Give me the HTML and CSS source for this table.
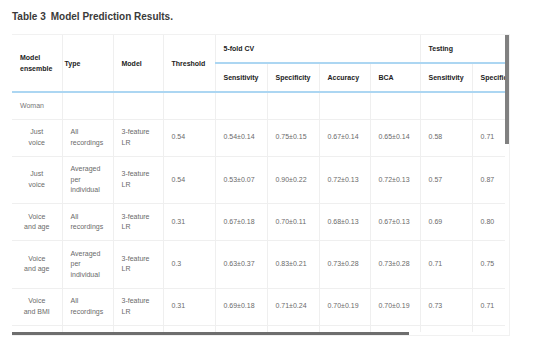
FILE: index.html
```html
<!DOCTYPE html>
<html>
<head>
<meta charset="utf-8">
<link rel="stylesheet" href="styles.css">
</head>
<body>
<h3 class="caption"><span class="label">Table 3</span>Model Prediction Results.</h3>
<div class="frame">
<div class="scroller">
<table class="results">
<colgroup>
<col class="c50"><col class="c51"><col class="c50"><col class="c52">
<col class="c52"><col class="c52"><col class="c51"><col class="c50">
<col class="c52"><col class="c52"><col class="c52"><col class="c52">
</colgroup>
<thead>
<tr>
<th rowspan="2" class="blue">Model ensemble</th>
<th rowspan="2" class="blue tight">Type</th>
<th rowspan="2" class="blue">Model</th>
<th rowspan="2" class="blue">Threshold</th>
<th colspan="4" class="blue">5-fold CV</th>
<th colspan="4" class="blue">Testing</th>
</tr>
<tr>
<th class="blue">Sensitivity</th><th class="blue">Specificity</th><th class="blue">Accuracy</th><th class="blue">BCA</th>
<th class="blue">Sensitivity</th><th class="blue">Specificity</th><th class="blue">Accuracy</th><th class="blue">BCA</th>
</tr>
</thead>
<tbody>
<tr><td class="group">Woman</td><td></td><td></td><td></td><td></td><td></td><td></td><td></td><td></td><td></td><td></td><td></td></tr>
<tr><td class="ens">Just voice</td><td>All recordings</td><td>3-feature LR</td><td>0.54</td><td>0.54±0.14</td><td>0.75±0.15</td><td>0.67±0.14</td><td>0.65±0.14</td><td>0.58</td><td>0.71</td><td>0.68</td><td>0.65</td></tr>
<tr><td class="ens">Just voice</td><td>Averaged per individual</td><td>3-feature LR</td><td>0.54</td><td>0.53±0.07</td><td>0.90±0.22</td><td>0.72±0.13</td><td>0.72±0.13</td><td>0.57</td><td>0.87</td><td>0.73</td><td>0.72</td></tr>
<tr><td class="ens">Voice and age</td><td>All recordings</td><td>3-feature LR</td><td>0.31</td><td>0.67±0.18</td><td>0.70±0.11</td><td>0.68±0.13</td><td>0.67±0.13</td><td>0.69</td><td>0.80</td><td>0.75</td><td>0.74</td></tr>
<tr><td class="ens">Voice and age</td><td>Averaged per individual</td><td>3-feature LR</td><td>0.3</td><td>0.63±0.37</td><td>0.83±0.21</td><td>0.73±0.28</td><td>0.73±0.28</td><td>0.71</td><td>0.75</td><td>0.73</td><td>0.73</td></tr>
<tr><td class="ens">Voice and BMI</td><td>All recordings</td><td>3-feature LR</td><td>0.31</td><td>0.69±0.18</td><td>0.71±0.24</td><td>0.70±0.19</td><td>0.70±0.19</td><td>0.73</td><td>0.71</td><td>0.72</td><td>0.72</td></tr>
<tr><td class="ens">Voice and BMI</td><td>Averaged per individual</td><td>3-feature LR</td><td>0.3</td><td>0.66±0.33</td><td>0.84±0.19</td><td>0.75±0.25</td><td>0.75±0.25</td><td>0.70</td><td>0.81</td><td>0.75</td><td>0.75</td></tr>
</tbody>
</table>
</div>
<div class="vbar"></div>
<div class="hbar"></div>
</div>
</body>
</html>
```
FILE: styles.css
```css
html, body {
  margin: 0;
  padding: 0;
  background: #ffffff;
}

body {
  font-family: "Liberation Sans", Arial, sans-serif;
  color: #333333;
}

.caption {
  margin: 11px 0 11px 12px;
  font-size: 10px;
  line-height: 12px;
  font-weight: bold;
  color: #3a3a3a;
}

.caption .label {
  margin-right: 5px;
}

.frame {
  position: relative;
  margin-left: 12px;
  width: 498px;
  height: 302px;
  box-sizing: border-box;
  border: 1px solid #f1f1f1;
  border-left: none;
  padding: 0 4px 3px 0;
}

.scroller {
  width: 100%;
  height: 100%;
  overflow: hidden;
}

.vbar {
  position: absolute;
  top: 0;
  right: 0;
  width: 4px;
  height: 109px;
  background: #808080;
}

.hbar {
  position: absolute;
  left: 0;
  bottom: 0;
  width: 397px;
  height: 3px;
  background: #6e6e6e;
}

.results {
  table-layout: fixed;
  width: 616px;
  border-collapse: collapse;
  font-size: 7px;
  line-height: 10.5px;
}

.c50 { width: 50px; }
.c51 { width: 51px; }
.c52 { width: 52px; }

.results th {
  text-align: left;
  font-weight: bold;
  color: #222222;
  padding: 8px 8px;
  line-height: 11px;
  vertical-align: middle;
  border-right: 1px solid #efefef;
}

.results th.blue {
  border-bottom: 2px solid #acd6f2;
}

.results th.tight {
  padding-left: 2px;
}

.results td {
  color: #6a6a6a;
  padding: 7.5px 8px;
  vertical-align: middle;
  text-align: left;
  border-right: 1px solid #efefef;
  border-bottom: 1px solid #efefef;
}

.results td.ens {
  text-align: center;
  padding-left: 10px;
  padding-right: 10px;
}

.results td.group {
  text-align: left;
  color: #777777;
}
```
